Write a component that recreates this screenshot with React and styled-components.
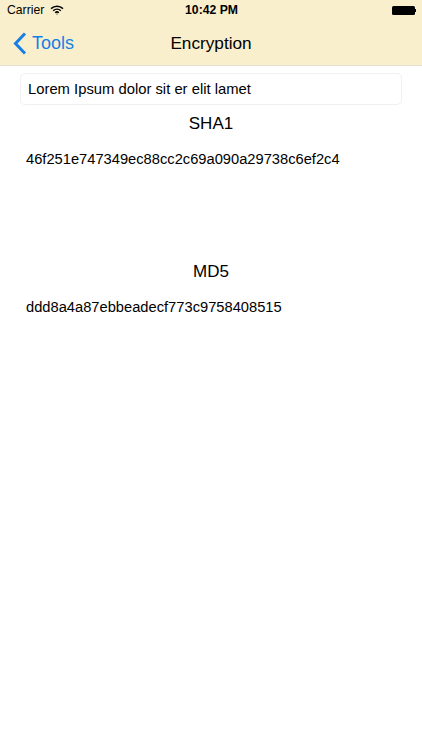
import React from 'react';
import styled, { createGlobalStyle } from 'styled-components';

const GlobalStyle = createGlobalStyle`
    html, body {
        margin: 0;
        padding: 0;
        background: #ffffff;
    }
    body {
        font-family: "Liberation Sans", Arial, sans-serif;
        color: #000000;
    }
`;

const Page = styled.div`
    width: 422px;
    height: 750px;
    overflow: hidden;
    background: #ffffff;
`;

const Header = styled.header`
    height: 66px;
    background: #f9efcd;
    border-bottom: 1px solid #e4dfcf;
    box-sizing: border-box;
`;

const StatusBar = styled.div`
    height: 20px;
    display: grid;
    grid-template-columns: 1fr auto 1fr;
    align-items: center;
    padding: 0 6px 0 7px;
    font-size: 12.2px;
`;

const Carrier = styled.div`
    display: flex;
    align-items: center;
    gap: 6px;
`;

const Clock = styled.div`
    font-weight: bold;
    font-size: 12.2px;
`;

const Battery = styled.div`
    justify-self: end;
    display: flex;
    align-items: center;
`;

const BatteryBody = styled.div`
    width: 23px;
    height: 9px;
    background: #000000;
    border-radius: 1.5px;
`;

const BatteryTip = styled.div`
    width: 1.5px;
    height: 3px;
    background: #000000;
`;

const NavBar = styled.nav`
    height: 47px;
    display: grid;
    grid-template-columns: 1fr auto 1fr;
    align-items: center;
`;

const BackLink = styled.a`
    display: flex;
    align-items: center;
    gap: 5px;
    padding-left: 13px;
    color: #167fe6;
    font-size: 18px;
`;

const Title = styled.h1`
    margin: 0;
    font-size: 17.2px;
    font-weight: normal;
`;

const Content = styled.main`
    padding: 7px 20px 0;
`;

const TextField = styled.div`
    height: 32px;
    box-sizing: border-box;
    border: 1px solid #f0f0f0;
    border-radius: 5px;
    padding: 0 7px 1px;
    display: flex;
    align-items: center;
    font-size: 14.8px;
`;

const Section = styled.section`
    height: ${(props) => props.$height}px;
    padding-top: 9px;
    box-sizing: border-box;
`;

const HashTitle = styled.h2`
    margin: 0;
    font-size: 17px;
    line-height: 20px;
    font-weight: normal;
    text-align: center;
`;

const HashValue = styled.p`
    margin: 17px 0 0 6px;
    font-size: 14.7px;
    line-height: 16px;
`;

const WifiIcon = () => (
    <svg width="14" height="10" viewBox="0 0 14 10" fill="none" stroke="#000" strokeWidth="1.5">
        <path d="M1 3.6C4.4.4 9.6.4 13 3.6" />
        <path d="M3.2 5.8c2.2-2 5.4-2 7.6 0" />
        <path d="M5.2 7.7c1-.9 2.6-.9 3.6 0" />
        <circle cx="7" cy="9" r="0.6" fill="#000" stroke="none" />
    </svg>
);

const BackChevron = () => (
    <svg width="14" height="23" viewBox="0 0 14 23" fill="none" stroke="#167fe6" strokeWidth="3">
        <path d="M12 1.5L2.5 11.5L12 21.5" />
    </svg>
);

const App = () => {
    return (
        <Page>
            <GlobalStyle />
            <Header>
                <StatusBar>
                    <Carrier>
                        Carrier
                        <WifiIcon />
                    </Carrier>
                    <Clock>10:42 PM</Clock>
                    <Battery>
                        <BatteryBody />
                        <BatteryTip />
                    </Battery>
                </StatusBar>
                <NavBar>
                    <BackLink>
                        <BackChevron />
                        Tools
                    </BackLink>
                    <Title>Encryption</Title>
                </NavBar>
            </Header>
            <Content>
                <TextField>Lorem Ipsum dolor sit er elit lamet</TextField>
                <Section $height={148}>
                    <HashTitle>SHA1</HashTitle>
                    <HashValue>46f251e747349ec88cc2c69a090a29738c6ef2c4</HashValue>
                </Section>
                <Section $height={100}>
                    <HashTitle>MD5</HashTitle>
                    <HashValue>ddd8a4a87ebbeadecf773c9758408515</HashValue>
                </Section>
            </Content>
        </Page>
    );
};

export default App;
